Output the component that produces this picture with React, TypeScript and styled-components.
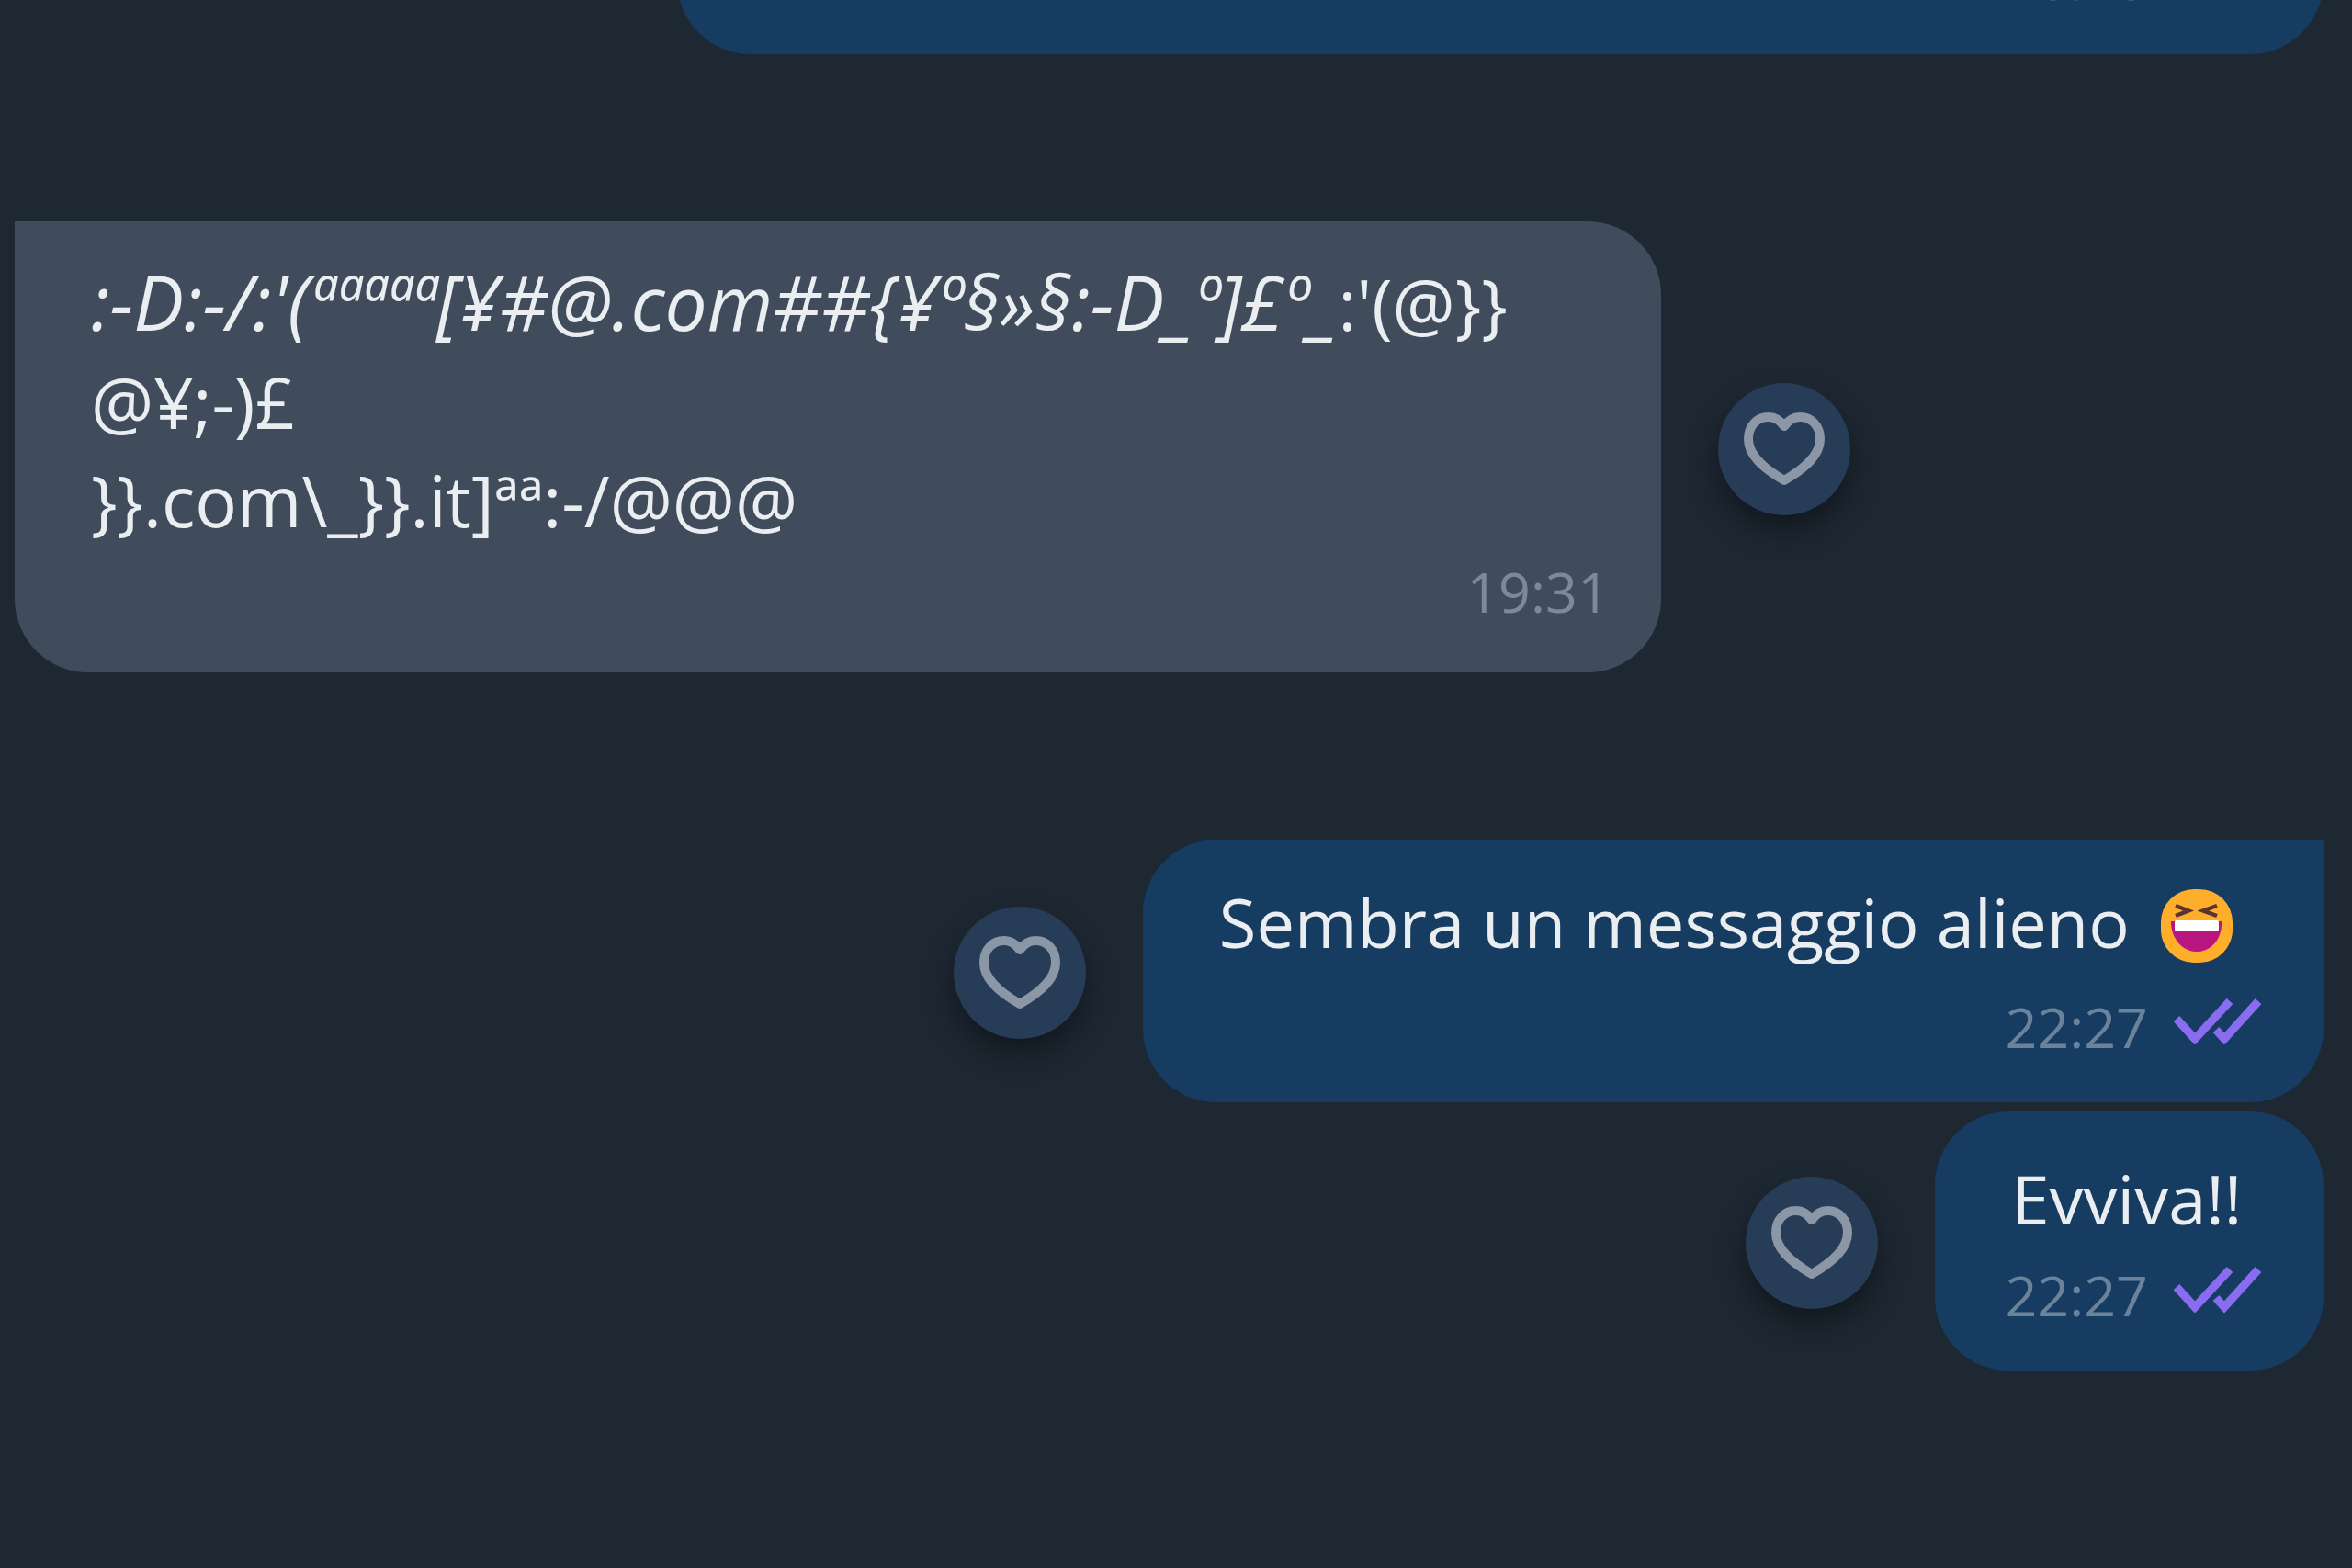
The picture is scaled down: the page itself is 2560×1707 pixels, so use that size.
import React from "react";
import styled, { createGlobalStyle } from "styled-components";

const GlobalStyle = createGlobalStyle`
  *, *::before, *::after { box-sizing: border-box; }
  body {
    margin: 0;
    background: #1e2832;
    color: #ebeef1;
    font-family: "Open Sans", "Noto Sans", sans-serif;
  }
`;

const Conversation = styled.main`
  display: flex;
  flex-direction: column;
  justify-content: flex-end;
  gap: 182px;
  height: 100vh;
  overflow: hidden;
  padding: 0 31px 215px 16px;
`;

const Group = styled.section`
  display: flex;
  flex-direction: column;
  flex-shrink: 0;
  gap: 10px;
`;

const Row = styled.div<{ $own?: boolean }>`
  display: flex;
  flex-direction: ${(p) => (p.$own ? "row-reverse" : "row")};
  align-items: center;
  gap: 62px;
`;

const Bubble = styled.article<{
  $own?: boolean;
  $followUp?: boolean;
  $full?: boolean;
}>`
  flex: ${(p) => (p.$full ? "0 0 71.3%" : "0 1 auto")};
  max-width: 71.3%;
  padding: ${(p) => (p.$followUp ? "41px" : "36px")}
    ${(p) => (p.$own ? "68px" : "56px")} 0 76px;
  background: ${(p) => (p.$own ? "#163c62" : "#404c5c")};
  border-radius: ${(p) =>
    p.$followUp ? "80px" : p.$own ? "80px 0 80px 80px" : "0 80px 80px 80px"};
`;

const Text = styled.p<{ $own?: boolean }>`
  margin: 0;
  padding-left: 7px;
  font-size: ${(p) => (p.$own ? "74px" : "76px")};
  line-height: 107px;

  em {
    font-size: 82px;
    line-height: 1;
  }
`;

const Meta = styled.footer<{ $own?: boolean }>`
  display: flex;
  justify-content: flex-end;
  align-items: center;
  gap: 28px;
  padding: ${(p) => (p.$own ? "12px 0 42px" : "6px 0 48px")};
  color: ${(p) => (p.$own ? "#6a839b" : "#7b899b")};
  font-size: 61px;
  line-height: 80px;
`;

const Ticks = styled.svg`
  display: block;
  width: 95px;
  height: 50px;
  margin-bottom: 12px;
  fill: none;
  stroke: #8a6cf0;
  stroke-width: 9;
`;

const LikeButton = styled.button`
  display: flex;
  flex: none;
  align-items: center;
  justify-content: center;
  width: 144px;
  height: 144px;
  margin: 4px 0 0;
  padding: 0;
  border: 0;
  border-radius: 50%;
  background: #273c56;
  box-shadow: 0 16px 28px rgba(10, 14, 20, 0.6);
  cursor: pointer;
`;

const HeartIcon = styled.svg`
  width: 88px;
  height: 80px;
  fill: none;
  stroke: #8b97a6;
  stroke-width: 10;
  stroke-linejoin: round;
`;

const EmojiIcon = styled.svg`
  width: 80px;
  height: 80px;
  margin: 0 30px 18px 14px;
  vertical-align: -34px;
`;

function Like() {
  return (
    <LikeButton type="button" aria-label="Mi piace">
      <HeartIcon viewBox="0 0 88 80" aria-hidden="true">
        <path d="M44 15C39 8 33 5 27 5C14 5 5 15 5 29C5 46 20 60 44 74C68 60 83 46 83 29C83 15 74 5 61 5C55 5 49 8 44 15Z" />
      </HeartIcon>
    </LikeButton>
  );
}

function Laughing() {
  return (
    <EmojiIcon viewBox="0 0 80 80" role="img" aria-label="😆">
      <rect x="1" y="0" width="78" height="80" rx="36" fill="#ffae2b" />
      <path
        d="M17 18L31 23.500L17 29M62 18L47 23.500L62 29"
        fill="none"
        stroke="#5a3434"
        strokeWidth="4.500"
      />
      <path d="M12 35H67C68 54 56 68 40 68C24 68 12 54 12 35Z" fill="#b9177f" />
      <rect x="16" y="34" width="48" height="12" rx="2" fill="#fff" />
    </EmojiIcon>
  );
}

interface MessageProps {
  time: string;
  own?: boolean;
  followUp?: boolean;
  full?: boolean;
  likeable?: boolean;
  children?: React.ReactNode;
}

function Message({
  time,
  own,
  followUp,
  full,
  likeable = true,
  children,
}: MessageProps) {
  return (
    <Row $own={own}>
      <Bubble $own={own} $followUp={followUp} $full={full}>
        <Text $own={own}>{children}</Text>
        <Meta $own={own}>
          <time>{time}</time>
          {own && (
            <Ticks viewBox="0 0 95 50" aria-hidden="true">
              <path d="M3 22L23 44L61 3M46 34L55 44L92 3" />
            </Ticks>
          )}
        </Meta>
      </Bubble>
      {likeable && <Like />}
    </Row>
  );
}

export default function App() {
  return (
    <>
      <GlobalStyle />
      <Conversation>
        <Group>
          <Message own full followUp likeable={false} time="20:48" />
        </Group>
        <Group>
          <Message full time="19:31">
            <em>{":-D:-/:'(ªªªªª[¥#@.com##{¥º§»§:-D_º]£º_"}</em>
            {":'(@}}"}
            <br />
            {"@¥;-)£"}
            <br />
            {"}}.com\\_}}.it]ªª:-/@@@"}
          </Message>
        </Group>
        <Group>
          <Message own time="22:27">
            Sembra un messaggio alieno <Laughing />
          </Message>
          <Message own followUp time="22:27">
            Evviva!!
          </Message>
        </Group>
      </Conversation>
    </>
  );
}
